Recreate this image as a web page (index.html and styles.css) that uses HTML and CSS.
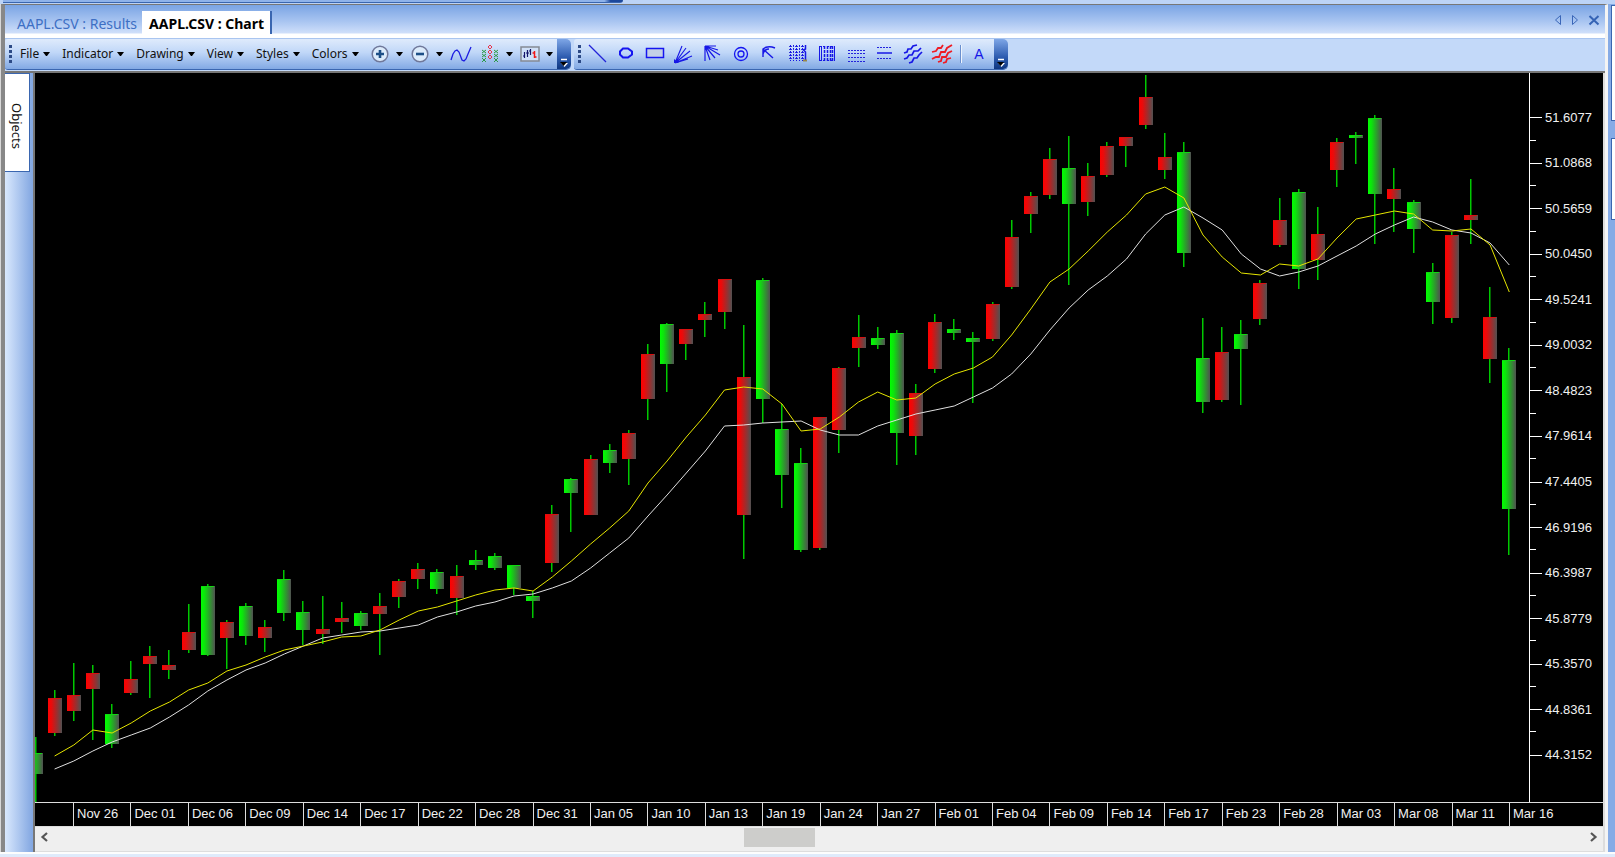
FILE: index.html
```html
<!DOCTYPE html>
<html lang="en">
<head>
<meta charset="utf-8">
<title>AAPL.CSV : Chart</title>
<link rel="stylesheet" href="styles.css">
</head>
<body>
<div class="app-top"><span class="app-top-bar"></span></div>
<div class="workspace">
  <main class="window">
    <nav class="tabs">
      <button class="tab">AAPL.CSV : Results</button>
      <button class="tab tab-active">AAPL.CSV : Chart</button>
      <span class="tab-controls">
        <button class="ctl" aria-label="Previous tab"><svg width="8" height="12" viewBox="0 0 8 12"><path d="M6.500 1.500v9L1.500 6z" fill="none" stroke="#3a66b8"/></svg></button>
        <button class="ctl" aria-label="Next tab"><svg width="8" height="12" viewBox="0 0 8 12"><path d="M1.500 1.500v9L6.500 6z" fill="none" stroke="#3a66b8"/></svg></button>
        <button class="ctl" aria-label="Close"><svg width="12" height="12" viewBox="0 0 12 12"><path d="M1.500 2l9 8.500M10.500 2l-9 8.500" fill="none" stroke="#3563b5" stroke-width="2"/></svg></button>
      </span>
    </nav>
    <div class="toolbars">
      <div class="toolbar toolbar-main">
        <span class="grip"></span>
        <div class="menus">
          <button class="menu">File<i class="caret"></i></button>
          <button class="menu">Indicator<i class="caret"></i></button>
          <button class="menu">Drawing<i class="caret"></i></button>
          <button class="menu">View<i class="caret"></i></button>
          <button class="menu">Styles<i class="caret"></i></button>
          <button class="menu">Colors<i class="caret"></i></button>
        </div>
        <div class="icons">
          <button class="split" aria-label="Zoom in"><svg width="20" height="20" viewBox="0 0 20 20"><circle cx="10" cy="10" r="7.800" fill="#dcebfb" stroke="#70789a" stroke-width="1.500"/><path d="M10 6v8M6 10h8" stroke="#1d4f86" stroke-width="2.600"/></svg><i class="caret"></i></button>
          <button class="split" aria-label="Zoom out"><svg width="20" height="20" viewBox="0 0 20 20"><circle cx="10" cy="10" r="7.800" fill="#dcebfb" stroke="#70789a" stroke-width="1.500"/><path d="M6 10h8" stroke="#1d4f86" stroke-width="2.600"/></svg><i class="caret"></i></button>
          <button class="wave" aria-label="Line"><svg width="22" height="18" viewBox="0 0 22 18"><path d="M1 15l2-6 2-3 2-1 2 2 3 8 2 1 2-2 2-5 3-7" fill="none" stroke="#1c1ce0" stroke-width="1.300"/></svg></button>
          <button class="split" aria-label="Point and figure"><svg width="20" height="20" viewBox="0 0 20 20"><path d="M2 6l4 3M6 6L2 9M2 10l4 3M6 10l-4 3M2 14l4 4M6 14l-4 4M14 6l4 3M18 6l-4 3M14 10l4 3M18 10l-4 3M14 14l4 4M18 14l-4 4" stroke="#2c9a46"/><path d="M10 1l2 2-2 2-2-2zM10 6l2 2-2 2-2-2zM10 11l2 2-2 2-2-2z" fill="none" stroke="#e8344a"/></svg><i class="caret"></i></button>
          <button class="split split-last" aria-label="Bar style"><svg width="20" height="16" viewBox="0 0 20 16"><rect x="1" y="1" width="18" height="14" fill="#cfe0f8" stroke="#858a94" stroke-width="1.500"/><path d="M4.500 6v6M3 10h1.500M7.500 4v7M6 7h3M10.500 3v6M9 5h1.500" stroke="#15156a" stroke-width="1.200"/><path d="M14.500 5v7M12.500 7h2M14.500 11h2" stroke="#f01818" stroke-width="1.500"/></svg><i class="caret"></i></button>
        </div>
        <button class="overflow" aria-label="Toolbar options"><svg width="8" height="9" viewBox="0 0 8 9"><path d="M1 1.500h6" stroke="#fff" stroke-width="1.500"/><path d="M1 5h7L4.500 9z" fill="#fff"/><path d="M0 4h7L3.500 8z" fill="#000"/></svg></button>
      </div>
      <div class="toolbar toolbar-draw">
        <span class="grip"></span>
        <div class="shapes">
          <button aria-label="Line"><svg width="20" height="20" viewBox="0 0 20 20"><path d="M2 1l17 17" stroke="#2323d8" stroke-width="1.200"/></svg></button>
          <button aria-label="Ellipse"><svg width="20" height="20" viewBox="0 0 20 20"><path d="M7 4.500h5l4 3v3l-4 3H7l-3-3v-3z" fill="none" stroke="#1515f0" stroke-width="2"/></svg></button>
          <button aria-label="Rectangle"><svg width="20" height="20" viewBox="0 0 20 20"><rect x="1.500" y="4.500" width="17" height="9" fill="#c3cfe6" stroke="#1515f0" stroke-width="1.500"/></svg></button>
          <button aria-label="Speed fan"><svg width="20" height="20" viewBox="0 0 20 20"><path d="M2 19L9 2M2 19L13 4M2 19L17 7M2 19l17-7M2 19l13-4" stroke="#1717e6" stroke-width="1.100"/><path d="M1 15v4h5z" fill="#1717e6"/></svg></button>
          <button aria-label="Gann fan"><svg width="20" height="20" viewBox="0 0 20 20"><path d="M3 2v15M3 2l5 14M3 2l10 12M3 2l15 9M3 2l13 4M3 2h11" stroke="#1717e6" stroke-width="1.200"/></svg></button>
          <button aria-label="Circles"><svg width="20" height="20" viewBox="0 0 20 20"><circle cx="10" cy="10" r="6.500" fill="none" stroke="#1515f0" stroke-width="1.300"/><circle cx="10" cy="10" r="3" fill="none" stroke="#1515f0" stroke-width="1.300"/></svg></button>
          <button aria-label="Arrow"><svg width="20" height="20" viewBox="0 0 20 20"><path d="M4 5l10 9M4 13V5q5-4 12-1M4 10c1-3 3-5 6-5" fill="none" stroke="#1717e6" stroke-width="1.400"/></svg></button>
          <button aria-label="Gann grid"><svg width="20" height="20" viewBox="0 0 20 20"><path d="M2.500 1v16M5.500 1v16M8.500 1v16M11.500 1v16M14.500 1v16" stroke="#1717e6" stroke-dasharray="2 1"/><path d="M1 2.500h16M1 5.500h16M1 8.500h16M1 11.500h16M1 14.500h16" stroke="#3535dc" stroke-dasharray="1 1"/><path d="M17.500 1v4l-2 1 2 2v9" fill="none" stroke="#1717e6" stroke-width="1.500"/><path d="M15 16.500h4" stroke="#98884a" stroke-width="2"/></svg></button>
          <button aria-label="Time zones"><svg width="20" height="20" viewBox="0 0 20 20"><path d="M2.500 2v15M17.500 2v15M4.500 2v15" stroke="#1717e6"/><path d="M7.500 2v15M10.500 2v15M13.500 2v15M15.500 2v15" stroke="#1717e6" stroke-width="1.500" stroke-dasharray="3 1"/><path d="M2 2.500h16M2 16.500h16" stroke="#1717e6" stroke-dasharray="2 2"/></svg></button>
          <button aria-label="Retracements"><svg width="20" height="20" viewBox="0 0 20 20"><path d="M2 6.500h17M2 9.500h17M2 13.500h17M2 17.500h17" stroke="#2323dc" stroke-dasharray="2 1"/></svg></button>
          <button aria-label="Channel"><svg width="20" height="20" viewBox="0 0 20 20"><path d="M3 3.500h15M3 14.500h15" stroke="#2323dc" stroke-dasharray="2 1"/><path d="M3 9h15" stroke="#1717e6" stroke-width="1.500"/></svg></button>
          <button aria-label="Regression"><svg width="20" height="20" viewBox="0 0 20 20"><path d="M1 9l3-1 1-3 3 0 2-3 4-1M1 15l3-1 2-3 3 0 2-4 4 0 3-3M6 19l3-1 2-4 3 0 2-3 3-3" fill="none" stroke="#1717e6" stroke-width="1.700"/></svg></button>
          <button aria-label="Regression channel"><svg width="22" height="20" viewBox="0 0 22 20"><path d="M1 8l4-1 2-3 3 0 2-3M1 15l4-2 3 0 2-5 4 0 2-4 5-3M7 18l3-1 1-4 4 0 2-4 4-2M12 19l3-1 1-3 4-1" fill="none" stroke="#ee1c24" stroke-width="1.800"/></svg></button>
        </div>
        <span class="sep"></span>
        <button class="text-tool">A</button>
        <button class="overflow" aria-label="Toolbar options"><svg width="8" height="9" viewBox="0 0 8 9"><path d="M1 1.500h6" stroke="#fff" stroke-width="1.500"/><path d="M1 5h7L4.500 9z" fill="#fff"/><path d="M0 4h7L3.500 8z" fill="#000"/></svg></button>
      </div>
    </div>
    <div class="content">
      <aside class="sidebar"><button class="side-tab">Objects</button></aside>
      <section class="chart">
        <div class="plot-row">
          <svg class="plot" id="plot" viewBox="35 73 1494 729" preserveAspectRatio="none" role="img" aria-label="AAPL candlestick chart">
            <defs>
              <linearGradient id="up"><stop offset="0" stop-color="#00ff00"/><stop offset=".25" stop-color="#0ce40c"/><stop offset="1" stop-color="#505050"/></linearGradient>
              <linearGradient id="down"><stop offset="0" stop-color="#ff0000"/><stop offset=".25" stop-color="#e80c0c"/><stop offset="1" stop-color="#505050"/></linearGradient>
            </defs>
          </svg>
          <ul class="prices" id="prices"></ul>
        </div>
        <ul class="dates" id="dates"></ul>
        <div class="scrollbar">
          <button aria-label="Scroll left"><svg width="9" height="10" viewBox="0 0 9 10"><path d="M7 1L2.500 5 7 9" fill="none" stroke="#555" stroke-width="2.200"/></svg></button>
          <div class="track"><span class="thumb"></span></div>
          <button aria-label="Scroll right"><svg width="9" height="10" viewBox="0 0 9 10"><path d="M2 1l4.500 4L2 9" fill="none" stroke="#555" stroke-width="2.200"/></svg></button>
        </div>
      </section>
    </div>
  </main>
  <aside class="dock"><div class="dock-a"></div><div class="dock-b"></div></aside>
</div>
<div class="app-bottom"></div>
<script src="chart.js"></script>
</body>
</html>
```

FILE: styles.css
```css
* { box-sizing: border-box; }
body {
  margin: 0;
  height: 100vh;
  display: flex;
  flex-direction: column;
  overflow: hidden;
  background: #e9f0fb;
  font: 12px/16px "Noto Sans", sans-serif;
  color: #111;
}
button {
  border: 0;
  padding: 0;
  margin: 0;
  background: none;
  font: inherit;
  color: inherit;
}
svg { display: block; flex: none; }
ul { list-style: none; margin: 0; padding: 0; }

.app-top { flex: none; height: 4px; background: #bcd3f6; padding-left: 3px; }
.app-top-bar {
  display: block;
  width: 620px;
  height: 3px;
  background: linear-gradient(90deg, #8fb3ea 97%, #1c489c 98%);
  border-bottom: 1px solid #3a66b0;
  border-bottom-right-radius: 4px;
}
.app-bottom { flex: none; height: 5px; background: linear-gradient(#fdfdfd 2px, #dfebfb 2px); }

.workspace { flex: 1; display: flex; min-height: 0; padding-left: 1px; background: #d8d8d8; }
.window {
  flex: 1;
  min-width: 0;
  display: flex;
  flex-direction: column;
  border-left: 4px solid #888;
  border-top: 1px solid #777;
  border-right: 3px solid #f4f4f4;
}

.tabs {
  flex: none;
  height: 33px;
  display: flex;
  align-items: flex-end;
  padding: 0 5px 4px 0;
  background: linear-gradient(#7aa4e4, #a9c5f1 50%, #cfdffa 28px, #fff 29px);
}
.tab {
  height: 23px;
  padding: 3px 5px 0 12px;
  color: #3d6fc4;
  font-size: 14px;
  white-space: nowrap;
}
.tab-active {
  padding: 3px 6px 0 7px;
  background: #fff;
  border-right: 2px solid #3a66b0;
  color: #000;
  font-weight: 700;
}
.tab-controls { margin-left: auto; display: flex; align-items: center; gap: 9px; height: 20px; align-self: center; }

.toolbars {
  flex: none;
  height: 35px;
  display: flex;
  gap: 3px;
  padding-bottom: 1px;
  background: #c3d9f9;
  border-bottom: 2px solid #777;
  border-top: 1px solid #a9c5f0;
}
.toolbar {
  display: flex;
  align-items: center;
  background: linear-gradient(#dfebfc, #c0d7f8 45%, #82a9e4);
  border-bottom: 1px solid #3a66b0;
  border-radius: 3px 5px 5px 3px;
}
.toolbar-main { width: 566px; }
.toolbar-draw { width: 434px; }
.grip {
  flex: none;
  width: 3px;
  height: 19px;
  margin-left: 4px;
  background: repeating-linear-gradient(#2c4a86 0 3px, transparent 3px 5px);
}
.menus { display: flex; gap: 12px; margin-left: 8px; }
.menu { display: flex; align-items: center; gap: 4px; white-space: nowrap; }
.caret {
  flex: none;
  width: 7px;
  border: solid transparent;
  border-width: 4px 3px 0;
  border-top-color: #000;
}
.icons { display: flex; align-items: center; margin-left: auto; }
.split { display: flex; align-items: center; gap: 6px; margin-right: 7px; }
.split-last { margin-right: 4px; }
.wave { margin-right: 8px; }
.overflow {
  flex: none;
  align-self: stretch;
  width: 14px;
  display: flex;
  align-items: flex-end;
  justify-content: center;
  padding-bottom: 2px;
  background: linear-gradient(#7ea6e6, #2d5cb0 60%, #0e3680);
  border-radius: 0 5px 5px 0;
}
.shapes { flex: 1; display: flex; margin-left: 2px; }
.shapes button { flex: 1; display: flex; justify-content: center; }
.sep { width: 2px; height: 18px; margin: 0 12px 0 4px; border-left: 1px solid #6a8fce; background: #eef4fd; }
.text-tool {
  width: 10px;
  margin-right: 10px;
  font: 14px/18px "Liberation Sans", sans-serif;
  color: #1515e6;
}

.content { flex: 1; display: flex; min-height: 0; }
.sidebar {
  flex: none;
  width: 30px;
  padding-right: 3px;
  background: linear-gradient(90deg, #d9e8fd, #84a8e2 27px);
  border-right: 2px solid #777;
}
.side-tab {
  width: 25px;
  height: 99px;
  writing-mode: vertical-rl;
  background: #fff;
  border: solid #3a66b0;
  border-width: 1px 1px 1px 0;
  padding-top: 7px;
  font-size: 13px;
}

.chart { flex: 1; min-width: 0; display: flex; flex-direction: column; border-right: 2px solid #ddd; }
.plot-row { flex: 1; min-height: 0; display: flex; background: #000; }
.plot { flex: 1; min-width: 0; height: 100%; }
.ma { fill: none; stroke-width: 1; }
.ma-fast { stroke: #e6e600; }
.ma-slow { stroke: #e0e0e0; }

.prices {
  flex: none;
  width: 74px;
  padding: 22px 0 24px;
  border-left: 1px solid #fff;
  display: flex;
  flex-direction: column;
  font: 13px/16px "Liberation Sans", sans-serif;
  color: #f0f0f0;
}
.prices li { flex: 1; position: relative; display: flex; align-items: center; gap: 3px; }
.prices li::before { content: ""; width: 12px; height: 1px; background: #fff; }
.prices li:not(:last-child)::after {
  content: "";
  position: absolute;
  left: 0;
  bottom: 0;
  width: 6px;
  height: 1px;
  background: #fff;
}
.dates {
  flex: none;
  display: grid;
  grid-template-columns: repeat(25, 1fr) 94px;
  height: 25px;
  padding-left: 38px;
  background: #000;
  border: solid #ddd;
  border-width: 1px 0;
  font: 13px/22px "Liberation Sans", sans-serif;
  color: #f0f0f0;
}
.dates li { border-left: 1px solid #ddd; padding-left: 3px; white-space: nowrap; }

.scrollbar { flex: none; height: 25px; display: flex; align-items: center; padding: 0 5px 4px; background: #efefef; border-bottom: 1px solid #ddd; }
.track { flex: 1; padding-left: 44.6%; }
.thumb { display: block; width: 71px; height: 19px; background: #cdcdcb; }

.dock { flex: none; width: 7px; display: flex; flex-direction: column; gap: 17px; padding: 1px 0 0 3px; background: #86abe6; }
.dock-a, .dock-b { background: #fff; border: 1px solid #3a66b0; border-right: 0; }
.dock-a { height: 116px; }
.dock-b { height: 82px; }
```

FILE: chart.js
```js
// [high, bodyTop, bodyBottom, low, colour] in plot units, one row per session
const sessions = [
  [737,753,774,802,'g'],[690,698,733,736,'r'],[663,695,711,721,'r'],[665,673,689,740,'r'],
  [704,714,744,748,'g'],[661,679,693,695,'r'],[646,656,664,698,'r'],[650,665,670,679,'r'],
  [604,632,650,653,'r'],[584,586,655,656,'g'],[620,622,638,669,'r'],[603,606,636,645,'g'],
  [620,627,638,652,'r'],[570,579,613,621,'g'],[601,612,630,645,'g'],[596,629,634,644,'r'],
  [602,618,622,633,'r'],[611,613,626,630,'g'],[593,606,614,655,'r'],[579,581,597,608,'r'],
  [563,569,579,589,'r'],[569,572,589,594,'g'],[565,576,598,615,'r'],[550,560,565,570,'g'],
  [553,556,568,570,'g'],[565,565,588,595,'g'],[591,596,601,618,'g'],[505,514,563,572,'r'],
  [478,479,493,532,'g'],[455,459,515,515,'r'],[444,450,463,473,'g'],[430,433,459,485,'r'],
  [344,354,399,420,'r'],[323,324,364,392,'g'],[329,329,344,360,'r'],[302,314,320,337,'r'],
  [279,279,312,329,'r'],[325,377,515,559,'r'],[278,280,399,423,'g'],[404,429,475,508,'g'],
  [448,463,550,552,'g'],[417,417,548,550,'r'],[367,368,430,453,'r'],[315,337,348,367,'r'],
  [327,338,345,349,'g'],[330,333,433,465,'g'],[384,393,436,455,'r'],[314,322,369,373,'r'],
  [319,329,333,340,'g'],[332,338,342,403,'g'],[302,304,339,341,'r'],[220,237,287,289,'r'],
  [192,196,214,233,'r'],[148,159,195,199,'r'],[136,168,204,285,'g'],[163,176,202,216,'r'],
  [142,146,175,177,'r'],[137,137,146,167,'r'],[75,97,125,129,'r'],[133,157,170,179,'r'],
  [142,152,253,267,'g'],[318,358,402,413,'g'],[327,352,400,402,'r'],[320,334,349,405,'g'],
  [280,283,319,325,'r'],[198,220,245,247,'r'],[189,192,269,289,'g'],[207,234,260,280,'r'],
  [138,142,170,187,'r'],[132,135,138,164,'g'],[115,118,194,244,'g'],[168,189,199,232,'r'],
  [200,202,229,253,'g'],[263,272,302,324,'g'],[232,235,318,323,'r'],[179,215,220,244,'r'],
  [287,317,359,383,'r'],[348,360,509,555,'g']
];
// Moving averages start at the second session
const fast = [756,745,730,733,723,711,702,690,683,671,665,657,650,646,642,637,636,630,620,611,607,601,595,590,588,591,577,561,544,528,511,483,461,437,415,390,387,389,404,431,429,417,402,392,400,398,384,374,368,357,335,309,282,269,251,232,215,194,187,198,235,257,273,275,264,266,259,238,219,215,211,214,230,231,229,245,292];
const slow = [769,761,751,742,735,728,717,705,691,680,670,663,654,646,638,635,632,631,628,625,617,612,606,602,596,594,588,581,568,553,538,516,495,473,451,426,425,423,422,421,430,435,435,426,420,414,410,406,397,388,374,354,330,308,290,276,259,234,215,207,218,230,254,269,276,272,266,256,246,234,225,217,222,230,233,243,265];

const STEP = 19.14;
const xAt = i => 35.5 + i * STEP;
const plot = document.getElementById('plot');

function add(name, attrs) {
  const el = document.createElementNS('http://www.w3.org/2000/svg', name);
  for (const key in attrs) el.setAttribute(key, attrs[key]);
  plot.appendChild(el);
}

sessions.forEach(([high, top, bottom, low, colour], i) => {
  const x = Math.round(xAt(i));
  add('rect', { x: x - 1, y: high, width: 1.5, height: low - high, fill: '#00c800' });
  add('rect', { x: x - 7, y: top, width: 14, height: Math.max(2, bottom - top), fill: colour === 'g' ? 'url(#up)' : 'url(#down)' });
  add('rect', { x: x - 7, y: top, width: 13, height: 1, fill: colour === 'g' ? '#10d810' : '#d81010' });
});

function line(values, cls) {
  add('polyline', { class: 'ma ' + cls, points: values.map((y, i) => xAt(i + 1).toFixed(1) + ',' + y).join(' ') });
}
line(slow, 'ma-slow');
line(fast, 'ma-fast');

function fill(id, labels) {
  document.getElementById(id).innerHTML = labels.map(t => '<li>' + t + '</li>').join('');
}
fill('prices', ['51.6077','51.0868','50.5659','50.0450','49.5241','49.0032','48.4823','47.9614','47.4405','46.9196','46.3987','45.8779','45.3570','44.8361','44.3152']);
fill('dates', ['Nov 26','Dec 01','Dec 06','Dec 09','Dec 14','Dec 17','Dec 22','Dec 28','Dec 31','Jan 05','Jan 10','Jan 13','Jan 19','Jan 24','Jan 27','Feb 01','Feb 04','Feb 09','Feb 14','Feb 17','Feb 23','Feb 28','Mar 03','Mar 08','Mar 11','Mar 16']);
```
